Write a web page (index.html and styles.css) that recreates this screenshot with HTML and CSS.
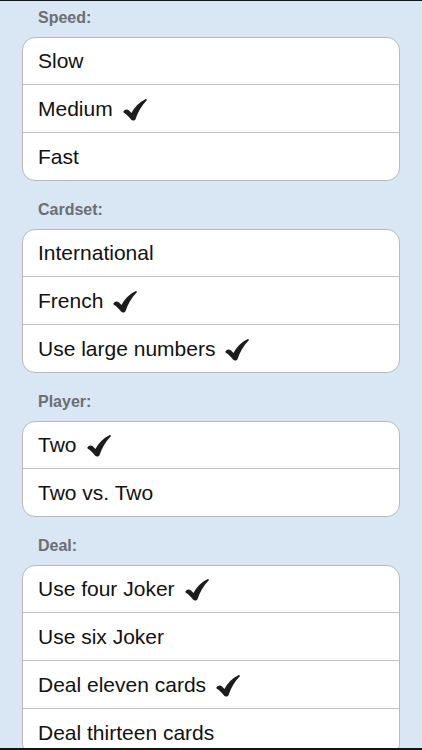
FILE: index.html
```html
<!DOCTYPE html>
<html lang="en">
<head>
<meta charset="utf-8">
<title>Settings</title>
<link rel="stylesheet" href="styles.css">
</head>
<body>
<div class="screen">
  <div class="edge edge-top"></div>
  <div class="viewport">
    <div class="content">
      <section class="group">
        <h2 class="group-title">Speed:</h2>
        <ul class="card">
          <li class="row">Slow</li>
          <li class="row">Medium <svg class="check" viewBox="0 0 24 22"><path d="M0.4 12.4 C1.6 10.4 4 9.8 5.8 11.2 L8.4 13.9 C11.6 7.9 16.2 3.1 22.4 0.2 C23.5 -0.2 24.3 0.8 23.6 1.6 C18.6 6.8 15 13 12.6 19.9 C11.9 21.8 9.2 22.2 8 20.6 C5.9 17.7 3.5 15.3 0.9 13.8 C0.3 13.4 0.1 12.9 0.4 12.4 Z"/></svg></li>
          <li class="row">Fast</li>
        </ul>
      </section>
      <section class="group">
        <h2 class="group-title">Cardset:</h2>
        <ul class="card">
          <li class="row">International</li>
          <li class="row">French <svg class="check" viewBox="0 0 24 22"><path d="M0.4 12.4 C1.6 10.4 4 9.8 5.8 11.2 L8.4 13.9 C11.6 7.9 16.2 3.1 22.4 0.2 C23.5 -0.2 24.3 0.8 23.6 1.6 C18.6 6.8 15 13 12.6 19.9 C11.9 21.8 9.2 22.2 8 20.6 C5.9 17.7 3.5 15.3 0.9 13.8 C0.3 13.4 0.1 12.9 0.4 12.4 Z"/></svg></li>
          <li class="row">Use large numbers <svg class="check" viewBox="0 0 24 22"><path d="M0.4 12.4 C1.6 10.4 4 9.8 5.8 11.2 L8.4 13.9 C11.6 7.9 16.2 3.1 22.4 0.2 C23.5 -0.2 24.3 0.8 23.6 1.6 C18.6 6.8 15 13 12.6 19.9 C11.9 21.8 9.2 22.2 8 20.6 C5.9 17.7 3.5 15.3 0.9 13.8 C0.3 13.4 0.1 12.9 0.4 12.4 Z"/></svg></li>
        </ul>
      </section>
      <section class="group">
        <h2 class="group-title">Player:</h2>
        <ul class="card">
          <li class="row">Two <svg class="check" viewBox="0 0 24 22"><path d="M0.4 12.4 C1.6 10.4 4 9.8 5.8 11.2 L8.4 13.9 C11.6 7.9 16.2 3.1 22.4 0.2 C23.5 -0.2 24.3 0.8 23.6 1.6 C18.6 6.8 15 13 12.6 19.9 C11.9 21.8 9.2 22.2 8 20.6 C5.9 17.7 3.5 15.3 0.9 13.8 C0.3 13.4 0.1 12.9 0.4 12.4 Z"/></svg></li>
          <li class="row">Two vs. Two</li>
        </ul>
      </section>
      <section class="group">
        <h2 class="group-title">Deal:</h2>
        <ul class="card">
          <li class="row">Use four Joker <svg class="check" viewBox="0 0 24 22"><path d="M0.4 12.4 C1.6 10.4 4 9.8 5.8 11.2 L8.4 13.9 C11.6 7.9 16.2 3.1 22.4 0.2 C23.5 -0.2 24.3 0.8 23.6 1.6 C18.6 6.8 15 13 12.6 19.9 C11.9 21.8 9.2 22.2 8 20.6 C5.9 17.7 3.5 15.3 0.9 13.8 C0.3 13.4 0.1 12.9 0.4 12.4 Z"/></svg></li>
          <li class="row">Use six Joker</li>
          <li class="row">Deal eleven cards <svg class="check" viewBox="0 0 24 22"><path d="M0.4 12.4 C1.6 10.4 4 9.8 5.8 11.2 L8.4 13.9 C11.6 7.9 16.2 3.1 22.4 0.2 C23.5 -0.2 24.3 0.8 23.6 1.6 C18.6 6.8 15 13 12.6 19.9 C11.9 21.8 9.2 22.2 8 20.6 C5.9 17.7 3.5 15.3 0.9 13.8 C0.3 13.4 0.1 12.9 0.4 12.4 Z"/></svg></li>
          <li class="row">Deal thirteen cards</li>
        </ul>
      </section>
    </div>
  </div>
  <div class="edge edge-bottom"></div>
</div>
</body>
</html>
```

FILE: styles.css
```css
* {
  box-sizing: border-box;
}

html, body {
  margin: 0;
  padding: 0;
  background: #d9e6f4;
}

body {
  font-family: "Liberation Sans", Arial, Helvetica, sans-serif;
  color: #111;
}

.screen {
  width: 422px;
  height: 750px;
  display: flex;
  flex-direction: column;
  overflow: hidden;
  background: #d9e6f4;
}

.edge {
  flex: 0 0 auto;
  background: #141414;
}

.edge-top {
  height: 1px;
}

.edge-bottom {
  height: 2px;
}

.viewport {
  flex: 1 1 auto;
  overflow: hidden;
}

.content {
  margin-top: -12px;
  padding: 0 22px;
}

.group-title {
  margin: 0;
  padding: 20px 0 10px 16px;
  height: 48px;
  font-size: 16px;
  line-height: 18px;
  font-weight: bold;
  color: #6d6d72;
}

.card {
  list-style: none;
  margin: 0;
  padding: 0;
  background: #ffffff;
  border: 1px solid #b9b9bc;
  border-radius: 13px;
  overflow: hidden;
}

.row {
  display: flex;
  align-items: center;
  gap: 10px;
  height: 48px;
  padding: 0 15px;
  border-top: 1px solid #c6c6c9;
  font-size: 21px;
  color: #111;
}

.row:first-child {
  height: 46px;
  border-top: 0;
}

.check {
  width: 24px;
  height: 22px;
  margin-top: 2px;
  fill: #1c1c1c;
}
```
